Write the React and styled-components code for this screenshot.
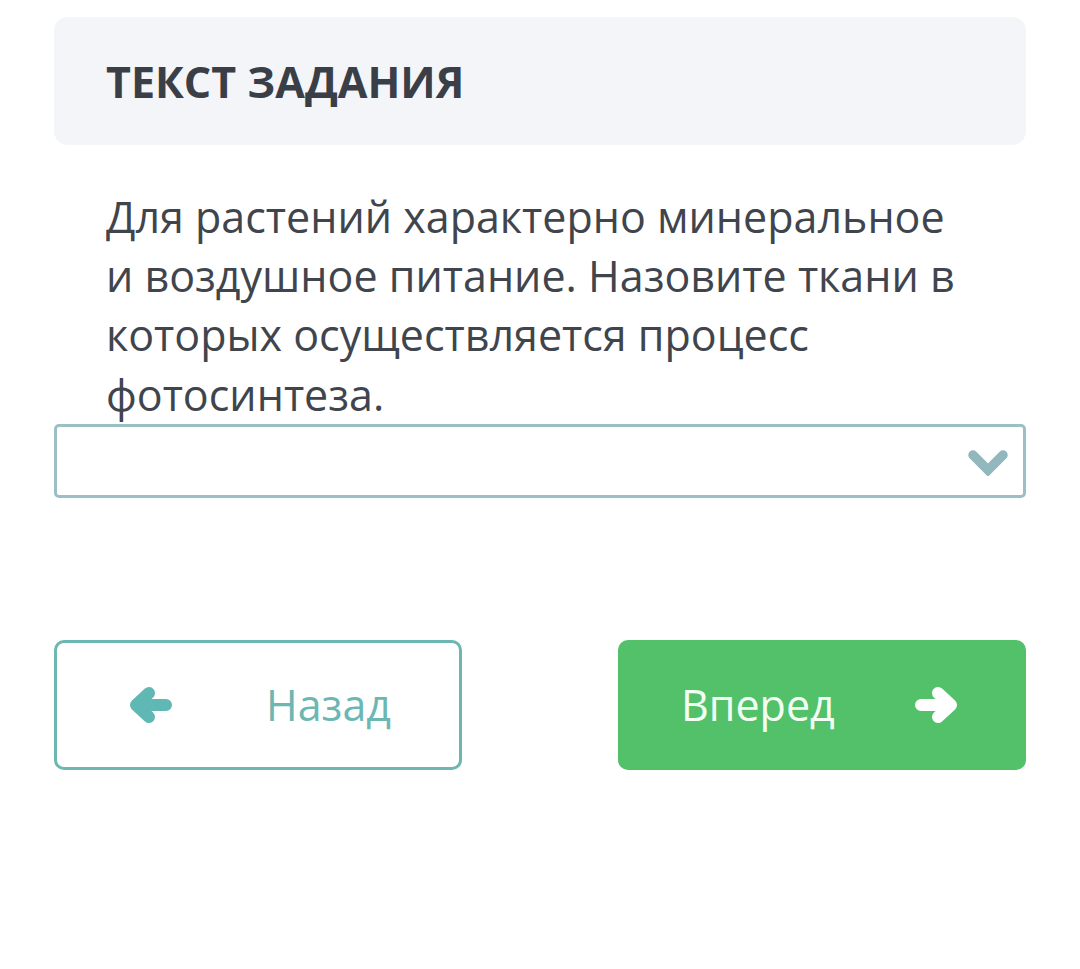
import React from "react";
import styled, { createGlobalStyle } from "styled-components";

const Global = createGlobalStyle`
  html, body { margin: 0; padding: 0; background: #ffffff; }
  body { font-family: "Open Sans", "Liberation Sans", sans-serif; }
  * { box-sizing: border-box; }
`;

const Page = styled.main`
  width: 1080px;
  padding: 17px 54px 0 54px;
`;

const Header = styled.div`
  height: 128px;
  background: #f3f5f8;
  border-radius: 14px;
  display: flex;
  align-items: center;
  padding: 0 52px;
`;

const Title = styled.h1`
  margin: 0;
  font-size: 43px;
  font-weight: 700;
  color: #3a3f47;
  line-height: 1;
`;

const Question = styled.p`
  margin: 42px 0 0 0;
  padding: 0 52px;
  font-size: 43px;
  line-height: 59.2px;
  color: #40454d;
`;

const Select = styled.div`
  height: 74px;
  border: 3px solid #9bbfc4;
  border-radius: 5px;
  display: flex;
  align-items: center;
  justify-content: flex-end;
  padding-right: 14px;
  background: #fff;
`;

const Actions = styled.div`
  margin-top: 142px;
  display: flex;
  justify-content: space-between;
`;

const Button = styled.button`
  width: 408px;
  height: 130px;
  border-radius: 10px;
  display: flex;
  align-items: center;
  justify-content: space-between;
  font-family: "Open Sans", "Liberation Sans", sans-serif;
  font-size: 43px;
  cursor: pointer;
  border: 3px solid ${(p) => (p.$primary ? "#52c16a" : "#6db7b3")};
  background: ${(p) => (p.$primary ? "#52c16a" : "#ffffff")};
  color: ${(p) => (p.$primary ? "#f2fff3" : "#6db7b3")};
  padding: ${(p) => (p.$primary ? "0 64px 0 60px" : "0 68px 0 71px")};
  svg { flex: none; }
`;

const Chevron = () => (
  <svg width="42" height="30" viewBox="0 0 42 30">
    <path
      d="M6 9 L21 24 L36 9"
      fill="none"
      stroke="#92b7bd"
      strokeWidth="9.5"
      strokeLinecap="round"
      strokeLinejoin="miter"
    />
  </svg>
);

const Arrow = ({ dir, color }) => (
  <svg
    width="44"
    height="42"
    viewBox="0 0 44 42"
    style={dir === "right" ? { transform: "scaleX(-1)" } : undefined}
  >
    <path
      d="M38 21 H9 M21 9 L8 21 L21 33"
      fill="none"
      stroke={color}
      strokeWidth="12"
      strokeLinecap="round"
      strokeLinejoin="round"
    />
  </svg>
);

export default function App() {
  return (
    <>
      <Global />
      <Page>
        <Header>
          <Title>ТЕКСТ ЗАДАНИЯ</Title>
        </Header>
        <Question>
          Для растений характерно минеральное и воздушное питание. Назовите
          ткани в которых осуществляется процесс фотосинтеза.
        </Question>
        <Select>
          <Chevron />
        </Select>
        <Actions>
          <Button>
            <Arrow dir="left" color="#5fb8b3" />
            <span>Назад</span>
          </Button>
          <Button $primary>
            <span>Вперед</span>
            <Arrow dir="right" color="#ffffff" />
          </Button>
        </Actions>
      </Page>
    </>
  );
}
